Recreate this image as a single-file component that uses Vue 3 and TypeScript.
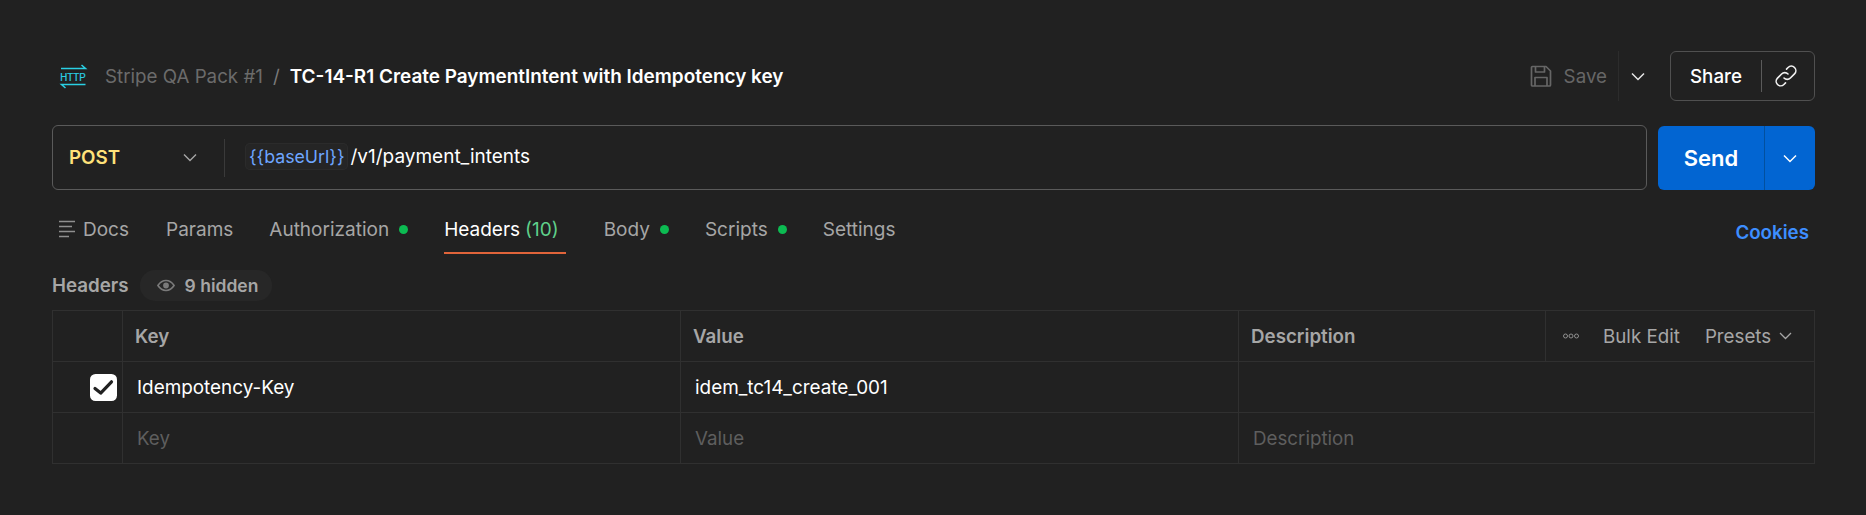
<script setup lang="ts">
interface Tab { label: string; dot?: boolean; count?: string; active?: boolean; docs?: boolean }
const tabs: Tab[] = [
  { label: 'Docs', docs: true },
  { label: 'Params' },
  { label: 'Authorization', dot: true },
  { label: 'Headers', count: '(10)', active: true },
  { label: 'Body', dot: true },
  { label: 'Scripts', dot: true },
  { label: 'Settings' },
]
</script>

<template>
  <main class="page">
    <header class="top">
      <svg class="http" width="34" height="26" viewBox="0 0 34 26" fill="none">
        <path d="M5 5.500H29.500L25.500 2" stroke="#2ad0e4" stroke-width="1.500" />
        <path d="M29.500 21.500H5.500L9.500 25" stroke="#2ad0e4" stroke-width="1.500" />
        <text class="http-text" transform="translate(17 17.700) scale(.88 1)" text-anchor="middle">HTTP</text>
      </svg>
      <span class="crumb">Stripe QA Pack #1</span>
      <span class="slash">/</span>
      <span class="title">TC-14-R1 Create PaymentIntent with Idempotency key</span>
      <div class="top-actions">
        <svg class="save-icon" width="24" height="24" viewBox="0 0 24 24" fill="none" stroke="#666" stroke-width="1.700" stroke-linejoin="round">
          <path d="M2.500 3.500a1 1 0 0 1 1-1h13.500l4.500 4.500v14a1 1 0 0 1-1 1H3.500a1 1 0 0 1-1-1z" />
          <path d="M6.500 2.500v5.500h9v-5.500" />
          <path d="M6 22v-8.500h12v8.500" />
        </svg>
        <span class="save-text">Save</span>
        <span class="save-split"></span>
        <svg class="chev save-chev" width="14" height="9" viewBox="0 0 14 9" fill="none"><path d="M1 1.500l6 6 6-6" stroke="#e6e6e6" stroke-width="1.500" /></svg>
        <div class="share">
          <span class="share-text">Share</span>
          <span class="share-split"></span>
          <svg class="link" width="24" height="24" viewBox="0 0 24 24" fill="none" stroke="#f2f2f2" stroke-width="1.600" stroke-linecap="round">
            <path d="M10 14a4.500 4.500 0 0 0 6.400 0l4.100-4.100a4.500 4.500 0 0 0-6.400-6.400l-1.600 1.600" />
            <path d="M14 10a4.500 4.500 0 0 0-6.400 0l-4.100 4.100a4.500 4.500 0 0 0 6.400 6.400l1.600-1.600" />
          </svg>
        </div>
      </div>
    </header>

    <section class="request">
      <div class="url-box">
        <span class="method">POST</span>
        <svg class="method-chev" width="14" height="9" viewBox="0 0 14 9" fill="none"><path d="M1 1.500l6 6 6-6" stroke="#a6a6a6" stroke-width="1.400" /></svg>
        <span class="url-split"></span>
        <span class="var">&#123;&#123;baseUrl&#125;&#125;</span>
        <span class="path">/v1/payment_intents</span>
      </div>
      <div class="send">
        <span class="send-text">Send</span>
        <span class="send-arrow">
          <svg width="14" height="9" viewBox="0 0 14 9" fill="none"><path d="M1 1.500l6 6 6-6" stroke="#fff" stroke-width="1.500" /></svg>
        </span>
      </div>
    </section>

    <nav class="tabs">
      <div v-for="t in tabs" :key="t.label" class="tab" :class="{ active: t.active, docs: t.docs }">
        <svg v-if="t.docs" class="docs-icon" width="18" height="18" viewBox="0 0 18 18" fill="none" stroke="#8f8f8f" stroke-width="1.600">
          <path d="M0 1.500h16M0 6.500h13M0 11.500h16M0 16.500h10" />
        </svg>
        <span>{{ t.label }}</span>
        <span v-if="t.count" class="count">{{ t.count }}</span>
        <span v-if="t.dot" class="dot"></span>
      </div>
      <span class="cookies">Cookies</span>
    </nav>

    <div class="head-row">
      <span class="head-label">Headers</span>
      <span class="pill">
        <svg width="18" height="13" viewBox="0 0 20 14" fill="none">
          <path d="M1 7c2.500-3.700 5.500-5.500 9-5.500s6.500 1.800 9 5.500c-2.500 3.700-5.500 5.500-9 5.500S3.500 10.700 1 7z" stroke="#7a7a7a" stroke-width="1.800" />
          <circle cx="10" cy="7" r="3.200" fill="#7a7a7a" />
        </svg>
        9 hidden
      </span>
    </div>

    <div class="table">
      <div class="row">
        <div class="cell c-check"></div>
        <div class="cell c-key th">Key</div>
        <div class="cell c-value th">Value</div>
        <div class="cell c-desc th">Description</div>
        <div class="cell c-act">
          <svg width="16" height="6" viewBox="0 0 16 6" fill="none" stroke="#8f8f8f" stroke-width="1"><circle cx="2.500" cy="3" r="2" /><circle cx="8" cy="3" r="2" /><circle cx="13.500" cy="3" r="2" /></svg>
          <span class="bulk">Bulk Edit</span>
          <span class="presets">Presets</span>
          <svg width="13" height="8" viewBox="0 0 13 8" fill="none"><path d="M1 1l5.500 5.500L12 1" stroke="#a6a6a6" stroke-width="1.300" /></svg>
        </div>
      </div>
      <div class="row">
        <div class="cell c-check">
          <svg class="checkbox" width="27" height="27" viewBox="0 0 27 27" fill="none">
            <rect width="27" height="27" rx="5.500" fill="#fff" />
            <path d="M5 14.500l5.700 4.600L21.500 7.800" stroke="#212121" stroke-width="3.200" stroke-linecap="round" stroke-linejoin="round" />
          </svg>
        </div>
        <div class="cell c-key td">Idempotency-Key</div>
        <div class="cell c-value td">idem_tc14_create_001</div>
        <div class="cell c-wide"></div>
      </div>
      <div class="row last">
        <div class="cell c-check"></div>
        <div class="cell c-key ph">Key</div>
        <div class="cell c-value ph">Value</div>
        <div class="cell c-wide ph">Description</div>
      </div>
    </div>
  </main>
</template>

<style>
html, body { margin: 0; background: #212121; }
</style>

<style scoped>
.page {
  box-sizing: border-box;
  width: 1866px;
  height: 515px;
  padding: 51px 51px 0 52px;
  background: #212121;
  color: #fff;
  font-family: Inter, "Noto Sans", sans-serif;
  font-size: 18.750px;
  overflow: hidden;
}
.top { display: flex; align-items: center; height: 50px; }
.http { margin-left: 4px; flex: none; }
.http-text { font-family: "Liberation Sans", sans-serif; font-size: 11px; fill: #2ad0e4; stroke: #2ad0e4; stroke-width: 0.25px; }
.crumb { margin-left: 15px; color: #6b6b6b; }
.slash { margin-left: 10px; color: #7a7a7a; }
.title { margin-left: 10px; font-size: 18.950px; font-weight: 600; color: #fff; }
.top-actions { margin-left: auto; display: flex; align-items: center; height: 50px; }
.save-text { margin-left: 11px; color: #666; }
.save-split { width: 1px; height: 50px; margin-left: 11px; background: #2c2c2c; }
.save-chev { margin-left: 12px; }
.share {
  box-sizing: border-box;
  display: flex;
  align-items: center;
  width: 145px;
  height: 50px;
  margin-left: 25px;
  border: 1px solid #505050;
  border-radius: 6px;
}
.share-text { margin-left: 19px; width: 71px; font-weight: 500; }
.share-split { width: 1px; height: 32px; background: #5a5a5a; }
.link { margin-left: 12px; }

.request { display: flex; gap: 11px; margin-top: 24px; height: 65px; }
.url-box {
  box-sizing: border-box;
  flex: 1;
  display: flex;
  align-items: center;
  border: 1px solid #5a5a5a;
  border-radius: 6px;
  padding-left: 16px;
}
.method { width: 114px; color: #ffe27a; font-weight: 600; }
.method-chev { flex: none; }
.url-split { width: 1px; height: 38px; margin-left: 27px; background: #3a3a3a; }
.var {
  margin-left: 20px;
  padding: 2px 4px;
  font-size: 17.750px;
  line-height: 23px;
  color: #6ea6ff;
  background: #252525;
  box-shadow: inset 0 0 0 1px #2b2b2b;
  border-radius: 5px;
  margin-top: -2px;
}
.path { margin-left: 2px; margin-top: -2px; color: #fff; font-size: 19px; }
.send {
  display: flex;
  width: 157px;
  margin-top: 1px;
  background: #0265d2;
  border-radius: 6px;
}
.send-text {
  width: 106px;
  display: flex;
  align-items: center;
  justify-content: center;
  font-size: 22px;
  font-weight: 600;
  border-right: 1px solid #02509f;
}
.send-arrow { flex: 1; display: flex; align-items: center; justify-content: center; }

.tabs { display: flex; align-items: center; height: 48px; margin-top: 15px; position: relative; font-size: 19px; }
.tab {
  display: flex;
  align-items: center;
  height: 48px;
  margin-left: 37px;
  color: #a6a6a6;
  position: relative;
}
.tab.docs { margin-left: 7px; }
.docs-icon { margin-right: 6px; }
.tab:nth-child(3) { margin-left: 36px; }
.tab.active { color: #fff; }
.tab.active::after {
  content: "";
  position: absolute;
  left: 0;
  right: -7px;
  bottom: -1px;
  height: 2px;
  background: #e0643a;
}
.count { margin-left: 5px; color: #5fd08a; }
.dot { width: 9px; height: 9px; border-radius: 50%; background: #0cbb52; margin-left: 10px; margin-right: -1px; }
.tab:nth-child(5) { margin-left: 45px; }
.cookies { margin-left: auto; margin-right: 6px; margin-top: 6px; color: #3d8eff; font-size: 18.750px; font-weight: 600; }

.head-row { display: flex; align-items: center; height: 31px; margin-top: 17px; }
.head-label { color: #a6a6a6; font-weight: 600; }
.pill {
  display: flex;
  align-items: center;
  gap: 10px;
  height: 31px;
  margin-left: 11px;
  padding: 0 14px 0 17px;
  color: #a6a6a6;
  background: #272727;
  border-radius: 15px;
  font-size: 17.500px;
  font-weight: 600;
}

.table {
  margin-top: 9px;
  border: 1px solid #303030;
  border-width: 1px 1px 0 1px;
}
.row { display: flex; height: 51px; box-sizing: border-box; border-bottom: 1px solid #303030; }
.cell {
  box-sizing: border-box;
  display: flex;
  align-items: center;
  border-right: 1px solid #303030;
  padding-left: 14px;
}
.cell:last-child { border-right: 0; }
.c-check { width: 70px; padding-left: 0; justify-content: flex-end; padding-right: 5px; }
.c-key { width: 558px; }
.c-value { width: 558px; }
.c-desc { width: 307px; }
.c-act { flex: 1; padding-left: 17px; color: #a6a6a6; }
.c-wide { flex: 1; }
.th { color: #a6a6a6; font-weight: 600; padding-left: 12px; }
.td { color: #fff; font-size: 18.900px; }
.ph { color: #5e5e5e; }
.bulk { margin-left: 24px; }
.presets { margin-left: 25px; margin-right: 8px; }
.checkbox { flex: none; }
</style>
